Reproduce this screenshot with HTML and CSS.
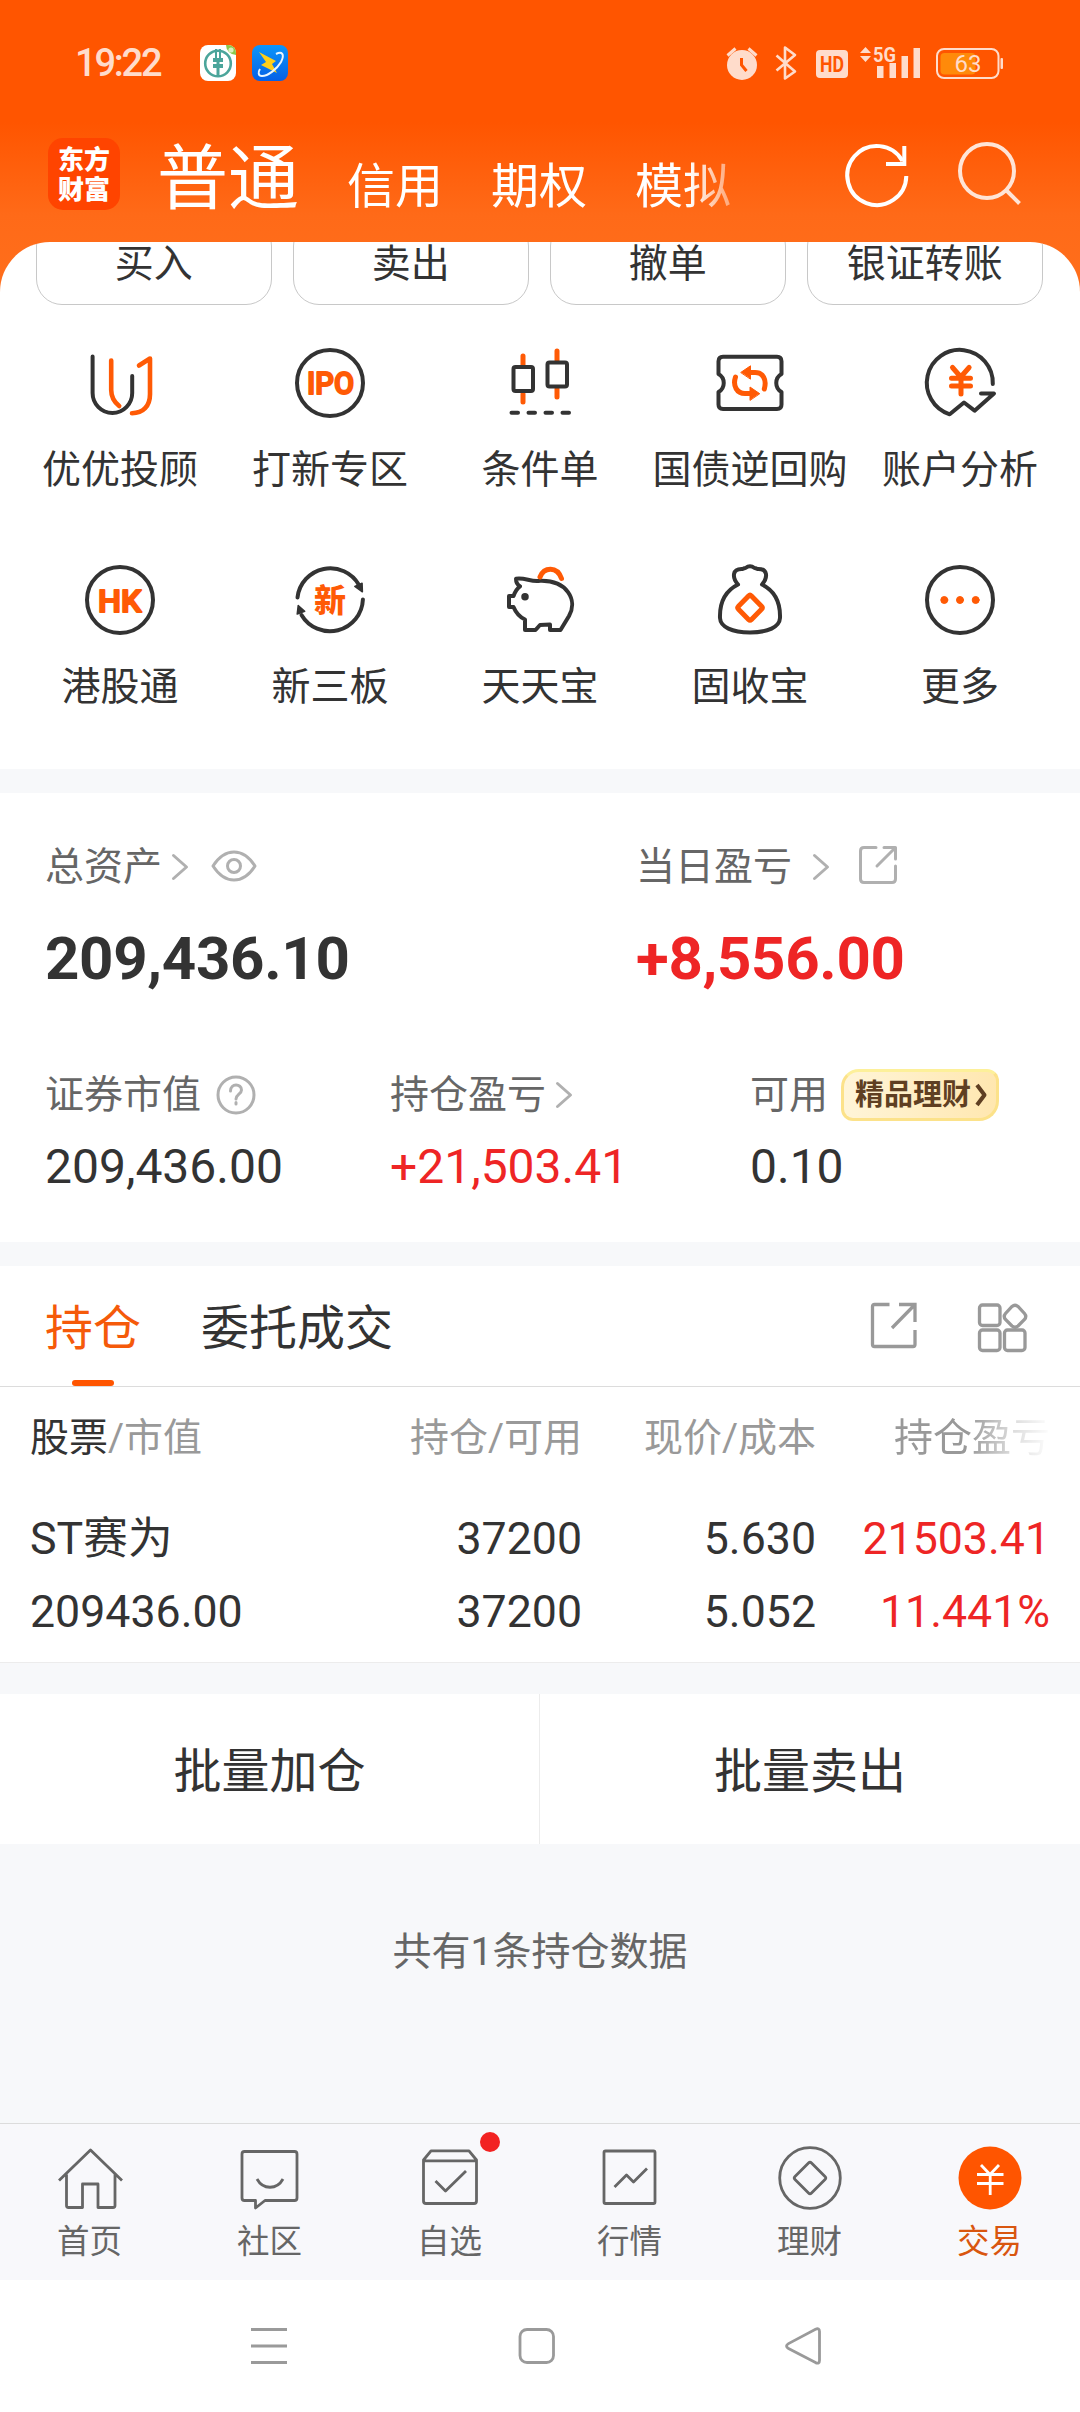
FILE: index.html
```html
<!DOCTYPE html>
<html lang="zh-CN">
<head>
<meta charset="utf-8">
<title>交易</title>
<link rel="stylesheet" href="styles.css">
</head>
<body>
<div class="screen">
  <header class="header">
    <div class="status">
      <span class="clock">19:22</span>
      <svg class="app-icon bank" width="36" height="36" viewBox="0 0 36 36">
        <rect width="36" height="36" rx="8" fill="#fff"/>
        <path d="M26 0h2a8 8 0 0 1 8 8v2a10 10 0 0 1-10-10z" fill="#8cc84b"/>
        <circle cx="31" cy="5" r="2.6" fill="#d9f0c0"/>
        <circle cx="18" cy="18.500" r="12.800" fill="none" stroke="#4ba59b" stroke-width="2.600"/>
        <path d="M15 4h2v9h2V4h2v9h2v4h-3.500v2h3.500v4h-3.500v9h-3v-9H13v-4h3.500v-2H13v-4h2z" fill="#4ba59b"/>
      </svg>
      <svg class="app-icon" width="36" height="36" viewBox="0 0 36 36">
        <defs><linearGradient id="blue" x2="0" y2="1"><stop stop-color="#0d96fa"/><stop offset="1" stop-color="#0560e6"/></linearGradient></defs>
        <rect width="36" height="36" rx="8" fill="url(#blue)"/>
        <path d="M7 7l17 9-4 3 5 9-16-8 5-3z" fill="#ffcf1a"/>
        <path d="M24 9c6-3 9 0 5 8-4 7-13 14-19 14-4 0-4-4-2-7" fill="none" stroke="#eaf6ff" stroke-width="2"/>
      </svg>
      <svg class="sys" width="280" height="36" viewBox="725 44 280 36" fill="#ffdccb">
        <circle cx="742" cy="64" r="15"/>
        <path d="M727.500 54.500l8-7M748.500 47.500l8 7" stroke="#ffdccb" stroke-width="3" fill="none"/>
        <path d="M741.500 57v7l5 6" stroke="#ff5500" stroke-width="3" fill="none"/>
        <path d="M776.500 54.500l18.500 16-10 7v-31l10 7.500-18.500 15.500" stroke="#ffdccb" stroke-width="2.600" fill="none" stroke-linejoin="round"/>
        <rect x="816" y="49" width="32" height="28" rx="4"/>
        <text x="820" y="71" class="hd" textLength="24" lengthAdjust="spacingAndGlyphs">HD</text>
        <path d="M860 52l5.500-6 5.500 6zM860 55h11l-5.500 6z"/>
        <text x="873" y="60.500" class="fiveg" textLength="23" lengthAdjust="spacingAndGlyphs">5G</text>
        <path d="M877 65h6.500v12h-6.500zM889.500 62h6.500v15h-6.500zM901.500 55h6.500v22h-6.500zM913.500 47h6.500v30h-6.500z"/>
        <rect x="940.500" y="52" width="35" height="21.500" rx="4" fill="#ff8a0a"/>
        <rect x="937" y="48" width="61.500" height="29" rx="7" fill="none" stroke="#ffdccb" stroke-width="2"/>
        <rect x="1000.500" y="57" width="2.500" height="11" rx="1"/>
        <text x="954.500" y="71" class="bat" textLength="27" lengthAdjust="spacingAndGlyphs">63</text>
      </svg>
    </div>
    <nav class="accounts">
      <div class="logo">东方财富</div>
      <div class="account-tabs">
        <span class="current">普通</span><span>信用</span><span>期权</span><span>模拟</span>
      </div>
      <svg class="refresh" width="66" height="66" viewBox="843 142 66 66" fill="none" stroke="#fff" stroke-width="4">
        <path d="M905.300 176A29.500 29.500 0 1 1 901.500 161"/><path d="M885 164h18.300v-18" />
      </svg>
      <svg class="search" width="66" height="66" viewBox="956 140 66 66" fill="none" stroke="#ffe4d6" stroke-width="4">
        <circle cx="987" cy="171" r="27"/><path d="M1006 190l13.500 13.500"/>
      </svg>
    </nav>
  </header>

  <main class="sheet">
    <div class="actions"><span>买入</span><span>卖出</span><span>撤单</span><span>银证转账</span></div>
    <div class="grid">
      <div class="tool">
        <svg class="ico" viewBox="0 0 72 72"><path d="M8.600 9.500V46a19.800 20 0 0 0 39.600 0V29"/><path class="o" d="M27.200 13.500V43c0 7 3 12 8 16M48 66.200c11 0 18-7 18-19V11.500l-11 7"/></svg>
        <span>优优投顾</span>
      </div>
      <div class="tool">
        <svg class="ico" viewBox="0 0 72 72"><circle cx="36" cy="36" r="33"/><text x="13" y="47" textLength="47" lengthAdjust="spacingAndGlyphs">IPO</text></svg>
        <span>打新专区</span>
      </div>
      <div class="tool">
        <svg class="ico" viewBox="0 0 72 72"><path class="o wide" d="M19 9v9M19 47v8M53 4v9M53 42v8"/><rect x="9.500" y="20" width="19.500" height="24" rx="2"/><rect x="43.500" y="15.500" width="19.500" height="24" rx="2"/><path d="M7.500 65.700h6.500M24.500 65.700h6.500M41.500 65.700h6.500M58.500 65.700h6.500"/></svg>
        <span>条件单</span>
      </div>
      <div class="tool">
        <svg class="ico" viewBox="0 0 72 72"><path d="M9 9.700h54q4.500 0 4.500 4.500V27c-7 4-7 14 0 18V57.500q0 4.500-4.500 4.500H9q-4.500 0-4.500-4.500V45c7-4 7-14 0-18V14.200q0-4.500 4.500-4.500z"/><path class="o wide" d="M35 25.500h6c8 0 12 7 9.300 16.500M21.500 30c-3 9 1.500 16.500 9.500 16.500h6"/><path class="of" d="M27 25.300l9.500-6.500v13zM45.500 46.500l-9.500-6.500v13z"/></svg>
        <span>国债逆回购</span>
      </div>
      <div class="tool">
        <svg class="ico" viewBox="0 0 72 72"><path d="M68.800 37A33 33 0 1 0 25.700 67.300L40 55.500l10.600 8.200L70 46.500H57"/><path class="o wide" d="M28.500 20.500l8.300 9.500 8.300-9.500M27.500 31.200h19M27.500 38.900h19M37 31v16"/></svg>
        <span>账户分析</span>
      </div>
      <div class="tool">
        <svg class="ico" viewBox="0 0 72 72"><circle cx="36" cy="36" r="33"/><text x="14" y="47.500" textLength="43.500" lengthAdjust="spacingAndGlyphs">HK</text></svg>
        <span>港股通</span>
      </div>
      <div class="tool">
        <svg class="ico" viewBox="0 0 72 72"><path d="M3.500 33.500A33 33 0 0 1 65 21M68.900 35.500A33 33 0 0 1 7.500 51"/><path class="df" d="M60.800 22.500l7.300-3.200.3 8.500zM4.200 41.500l6.500 5.700-7.500 2.800z"/><text class="xin" x="20" y="47.500">新</text></svg>
        <span>新三板</span>
      </div>
      <div class="tool">
        <svg class="ico" viewBox="0 0 72 72"><path d="M36 16.800c-9 1.500-15-3.500-24-2 0 4 1 6 4 7.500-3.500 2.500-5 5.500-6.500 9.700h-4.500v11h4.500c2.500 6 6 10 11.500 12.500V66h10.500l4.500-5 10-.500V66h10.500L65 52c9-16-2-36-29-35.200z"/><circle class="df" cx="21" cy="32.700" r="3"/><path class="o wide" d="M36 13c4-10 17-11 21.500 1.500"/></svg>
        <span>天天宝</span>
      </div>
      <div class="tool">
        <svg class="ico" viewBox="0 0 72 72"><path d="M24 20.500c-6-7-6-16 4.500-15.500q2-1 3-1 4.500-3.500 9 0 1 0 3 1C54 4.500 54 13.500 48 20.500 61 27 66.500 39 66 54c-.500 9-12 14.500-30 14.500S6.500 63 6 54C5.500 39 11 27 24 20.500"/><path class="o wide" d="M34.500 32q1.500-1.500 3 0l10 10.200q1.500 1.500 0 3l-10 10.200q-1.500 1.500-3 0l-10-10.200q-1.500-1.500 0-3z"/></svg>
        <span>固收宝</span>
      </div>
      <div class="tool">
        <svg class="ico" viewBox="0 0 72 72"><circle cx="36" cy="36" r="33"/><g class="dots"><circle cx="20.300" cy="36" r="3.500"/><circle cx="36" cy="36" r="3.500"/><circle cx="51.700" cy="36" r="3.500"/></g></svg>
        <span>更多</span>
      </div>
    </div>
  </main>

  <section class="assets">
    <div class="main-assets">
      <div class="cell">
        <div class="label">总资产<svg class="chev c1" viewBox="0 0 16 26"><path d="M1.500 1.500l13 11.500-13 11.500"/></svg>
          <svg class="eye" width="46" height="32" viewBox="0 0 46 32"><path d="M2 16Q11 2 23 2t21 14Q35 30 23 30T2 16z"/><circle cx="23" cy="16" r="6.500"/></svg></div>
        <div class="total">209,436.10</div>
      </div>
      <div class="cell">
        <div class="label">当日盈亏<svg class="chev c2" viewBox="0 0 16 26"><path d="M1.500 1.500l13 11.500-13 11.500"/></svg>
          <svg class="share" width="40" height="40" viewBox="0 0 40 40"><path d="M18 2.500H6Q2.500 2.500 2.500 6v28q0 3.500 3.500 3.500h28q3.500 0 3.500-3.500V21M26 2.500h11.500V14M37 3L19 21"/></svg></div>
        <div class="total up">+8,556.00</div>
      </div>
    </div>
    <div class="sub-assets">
      <div class="cell">
        <div class="label">证券市值<svg class="help" width="40" height="40" viewBox="0 0 40 40"><circle cx="20" cy="20" r="18"/><path d="M14.500 16c0-8 11-7.500 11-1 0 4-5.500 4.500-5.500 9M20 27.500v1.500"/></svg></div>
        <div class="value">209,436.00</div>
      </div>
      <div class="cell">
        <div class="label">持仓盈亏<svg class="chev c3" viewBox="0 0 16 26"><path d="M1.500 1.500l13 11.500-13 11.500"/></svg></div>
        <div class="value up">+21,503.41</div>
      </div>
      <div class="cell">
        <div class="label">可用<span class="promo">精品理财<svg width="12" height="22" viewBox="0 0 12 22"><path d="M2 1l7.500 10L2 21"/></svg></span></div>
        <div class="value">0.10</div>
      </div>
    </div>
  </section>

  <section class="holdings">
    <div class="tabs">
      <span class="tab on">持仓</span><span class="tab">委托成交</span>
      <svg class="t-share" width="48" height="48" viewBox="0 0 48 48"><path d="M19.500 2.500H4.500q-2 0-2 2v38q0 2 2 2h38.500q2 0 2-2V28M29 2.500h16V20M44.500 3L22 26"/></svg>
      <svg class="t-grid" width="52" height="52" viewBox="0 0 52 52"><rect x="2.500" y="3" width="20.500" height="20.500" rx="3"/><rect x="2.500" y="28" width="20.500" height="20.500" rx="3"/><rect x="27.500" y="28" width="20.500" height="20.500" rx="3"/><path d="M35 4.500q3-2.500 6 0l6.500 7q2.500 3 0 6l-6.500 6.500q-3 2.500-6 0l-6.500-6.500q-2.500-3 0-6z"/></svg>
    </div>
    <div class="row head"><span><b>股票</b>/市值</span><span>持仓/可用</span><span>现价/成本</span><span class="fade">持仓盈亏</span></div>
    <div class="row first"><span>ST赛为</span><span>37200</span><span>5.630</span><span class="up">21503.41</span></div>
    <div class="row second"><span>209436.00</span><span>37200</span><span>5.052</span><span class="up">11.441%</span></div>
  </section>

  <div class="batch"><span>批量加仓</span><span>批量卖出</span></div>
  <div class="count">共有1条持仓数据</div>

  <nav class="tabbar">
    <div class="item"><svg viewBox="0 0 66 66"><path d="M2 34.500L33.500 4 65 34.500M9.500 28.500v31q0 2 2 2H25.500V38h15.500v23.500h15q2 0 2-2v-31"/></svg>首页</div>
    <div class="item"><svg viewBox="0 0 66 66"><path d="M7.500 5.500h50q2.500 0 2.500 2.500v44q0 2.500-2.500 2.500H28l-9.500 7.500v-7.500H7.500Q5 54.500 5 52V8q0-2.500 2.500-2.500zM20 33c6 11 20 11 26 0"/></svg>社区</div>
    <div class="item"><svg viewBox="0 0 66 66"><path d="M6.500 14l7.500-9.200h38L59.500 14v41q0 2.500-2.500 2.500H9q-2.500 0-2.500-2.500zM6.500 14.800h53M18.500 35l10 10L49 25"/></svg>自选<i class="dot"></i></div>
    <div class="item"><svg viewBox="0 0 66 66"><path d="M8.500 5h48q1.500 0 1.500 1.500v49.500q0 1.500-1.500 1.500h-48Q7 57.500 7 56V6.500Q7 5 8.500 5zM17.500 41L29.500 29l7 7L50 22.500"/></svg>行情</div>
    <div class="item"><svg viewBox="0 0 66 66"><circle cx="33" cy="32" r="30.300"/><path d="M31.500 17q1.500-1.500 3 0l13.500 13.500q1.500 1.500 0 3L34.500 47q-1.500 1.500-3 0L18 33.500q-1.500-1.500 0-3z"/></svg>理财</div>
    <div class="item on"><svg viewBox="0 0 66 66"><circle class="of" cx="33" cy="32" r="31.500"/><path class="w" d="M24 19l9 9.500 9-9.500M20 28.500h26.500M20 37.500h26.500M33.200 28.500V49"/></svg>交易</div>
  </nav>

  <footer class="sysnav">
    <svg viewBox="0 0 40 40"><path d="M2 3.500h36M2 20h36M2 36.500h36"/></svg>
    <svg viewBox="0 0 40 40"><rect x="4" y="3.500" width="33.500" height="33" rx="7"/></svg>
    <svg viewBox="0 0 40 40"><path d="M32.500 3.200q4-1.500 4 2.200v29q0 4-4 2.200l-27-14q-4-2.500 0-5z"/></svg>
  </footer>
</div>
</body>
</html>
```
FILE: styles.css
```css
* { box-sizing: border-box; }
body { margin: 0; background: #fff; }
svg { display: block; flex: none; overflow: visible; }

.screen {
  width: 1080px;
  height: 2412px;
  display: flex;
  flex-direction: column;
  overflow: hidden;
  background: linear-gradient(#ff5500 0, #ff5500 122px, #ff6a18 215px, #ff6f1c 300px, #f7f8fa 301px);
  font-family: Roboto, "Noto Sans CJK SC", sans-serif;
  color: #333;
}

/* header */
.header { flex: none; height: 242px; color: #fff; }
.status { display: flex; align-items: center; height: 126px; padding: 0 75px; }
.clock { width: 125px; font-size: 38px; font-weight: 500; letter-spacing: -2.200px; color: #ffdccb; }
.app-icon + .app-icon { margin-left: 16px; }
.sys { margin-left: auto; }
.hd { font: 700 22px Roboto, sans-serif; fill: #ff5500; }
.fiveg { font: 700 21px Roboto, sans-serif; }
.bat { font: 400 24px Roboto, sans-serif; fill: #ffdccb; }

.accounts { display: flex; height: 116px; padding: 0 58px 0 48px; }
.logo {
  flex: none;
  width: 72px; height: 72px; margin-top: 12px; padding: 5px 10px;
  border-radius: 15px; background: #ff4400;
  font: 900 26px/30px "Noto Sans CJK SC", sans-serif;
  word-break: break-all;
}
.account-tabs {
  display: flex; flex: none; align-items: baseline; gap: 48px;
  width: 610px; margin-left: 37px;
  font-size: 48px; line-height: 107px;
  -webkit-mask-image: linear-gradient(90deg, #000 532px, transparent 604px);
  mask-image: linear-gradient(90deg, #000 532px, transparent 604px);
  white-space: nowrap;
}
.account-tabs .current { font-size: 71px; margin-top: -1px; }
.refresh { margin: 16px -1px 0 auto; }
.search { margin: 14px 0 0 47px; }

/* white sheet */
.sheet {
  flex: none; height: 527px; overflow: hidden;
  border-radius: 50px 50px 0 0; background: #fff;
}
.actions { display: flex; gap: 21.500px; margin-top: -22px; padding: 0 36px; }
.actions span {
  flex: none; width: 235.500px; height: 85px; line-height: 86px;
  border: 1px solid #c8c8c8; border-radius: 26px;
  font-size: 39px; text-align: center;
}
.grid {
  display: grid; grid-template-columns: repeat(5, 210px); grid-auto-rows: 217px;
  margin-top: 42px; padding: 0 15px;
}
.tool { display: flex; flex-direction: column; align-items: center; font-size: 39px; line-height: 46px; white-space: nowrap; }
.tool span { margin-top: 28px; }
.ico { width: 72px; height: 72px; fill: none; stroke: #333; stroke-width: 4px; stroke-linecap: round; stroke-linejoin: round; }
.ico .o { stroke: #ff5a05; stroke-width: 4.600px; }
.ico .wide { stroke-width: 5px; }
.ico .of, .ico .dots { fill: #ff5a05; stroke: #ff5a05; stroke-width: 1px; }
.ico .df { fill: #333; stroke-width: 1.500px; }
.ico text { font: 500 31px Roboto, sans-serif; fill: #ff5a05; stroke: #ff5a05; stroke-width: 2px; }
.ico .xin { font: 900 32px "Noto Sans CJK SC", sans-serif; stroke: none; }

/* assets */
.assets { flex: none; height: 473px; padding: 49px 0 0 45px; background: #fff; border-top: 24px solid #f7f8fa; }
.main-assets, .sub-assets { display: flex; }
.main-assets .cell { width: 591px; flex: none; }
.label { display: flex; align-items: center; height: 50px; font-size: 39px; line-height: 50px; color: #666; white-space: nowrap; }
.label svg { fill: none; stroke: #b0b0b0; stroke-width: 3px; stroke-linecap: round; stroke-linejoin: round; }
.chev { width: 16px; height: 26px; margin-top: -1px; }
.c1 { margin-left: 10px; }
.c2 { margin-left: 21px; }
.c3 { margin-left: 10px; }
.eye { margin: -2px 0 0 23px; }
.share { margin-left: 29px; margin-top: -4px; }
.help { margin-left: 15px; }
.total { margin-top: 31px; font-size: 60px; font-weight: 700; line-height: 72px; letter-spacing: -.300px; }
.up { color: #ee2525; }
.sub-assets { margin-top: 75px; }
.sub-assets .cell { width: 345px; flex: none; }
.sub-assets .cell:nth-child(2) { width: 360px; }
.value { margin-top: 17px; font-size: 48px; line-height: 60px; }
.promo {
  display: flex; align-items: center; gap: 4px;
  height: 52px; width: 158px; margin-left: 13px; margin-top: -1px; padding-left: 11px;
  border: 3px solid #fce28a; border-top-color: #fdf09a; border-radius: 18px 12px 20px 12px;
  background: linear-gradient(90deg, #fff5d8, #ffe7b0);
  font-size: 29px; font-weight: 700; color: #5f3f22;
}
.label .promo svg { stroke: #5f3f22; stroke-width: 4px; stroke-linecap: butt; }

/* holdings */
.holdings { flex: none; height: 421px; background: #fff; border-bottom: 1px solid #ececec; border-top: 24px solid #f7f8fa; }
.tabs { display: flex; height: 121px; padding: 0 51px 0 45px; border-bottom: 1px solid #dcdcdc; font-size: 48px; line-height: 126px; }
.tab + .tab { margin-left: 60px; }
.tab.on { color: #f55a0a; display: flex; flex-direction: column; align-items: center; height: 120px; }
.tab.on::after { content: ""; flex: none; width: 42px; height: 6px; margin-top: -12px; border-radius: 3px; background: #ff5500; }
.tabs svg { fill: none; stroke: #999; stroke-width: 3.300px; }
.t-share { margin: 36px 0 0 auto; }
.t-grid { margin: 36px 0 0 59px; }
.row { display: grid; grid-template-columns: 318px 234px 234px 234px; padding: 0 30px; font-size: 44.700px; line-height: 60px; white-space: nowrap; }
.row span + span { text-align: right; }
.head { margin-top: 21px; font-size: 39px; color: #999; }
.head b { font-weight: 400; color: #333; }
.fade { -webkit-mask-image: linear-gradient(90deg, #000 152px, rgba(0,0,0,.35) 196px, transparent 236px); mask-image: linear-gradient(90deg, #000 152px, rgba(0,0,0,.35) 196px, transparent 236px); }
.first { margin-top: 41px; }
.second { margin-top: 13px; }

/* batch buttons */
.batch { flex: none; display: flex; height: 181px; border-top: 31px solid #f7f8fa; background: #fff; font-size: 48px; line-height: 155px; text-align: center; }
.batch span { flex: none; width: 539px; }
.batch span + span { width: 541px; border-left: 1px solid #ececec; }
.count { flex: 1; background: #f7f8fa; padding-top: 83px; font-size: 39px; line-height: 50px; color: #666; text-align: center; }

/* bottom bar */
.tabbar { flex: none; display: flex; height: 157px; border-top: 1px solid #dcdcdc; background: #f8f8fb; }
.item { position: relative; width: 180px; display: flex; flex-direction: column; align-items: center; padding: 22px 1px 0 0; font-size: 32.500px; line-height: 38px; color: #666; }
.item svg { width: 66px; height: 66px; margin-bottom: 11px; fill: none; stroke: #666; stroke-width: 2.800px; stroke-linejoin: round; }
.item .of { fill: #ff5500; stroke: none; }
.item .w { stroke: #fff; }
.item.on { color: #d9560f; }
.dot { position: absolute; left: 120px; top: 8px; width: 20px; height: 20px; border-radius: 50%; background: #f22222; }

.sysnav { flex: none; display: flex; height: 132px; padding: 46px 257px 0 249px; justify-content: space-between; background: #fff; }
.sysnav svg { width: 40px; height: 40px; fill: none; stroke: #9a9a9a; stroke-width: 2.800px; }
```
